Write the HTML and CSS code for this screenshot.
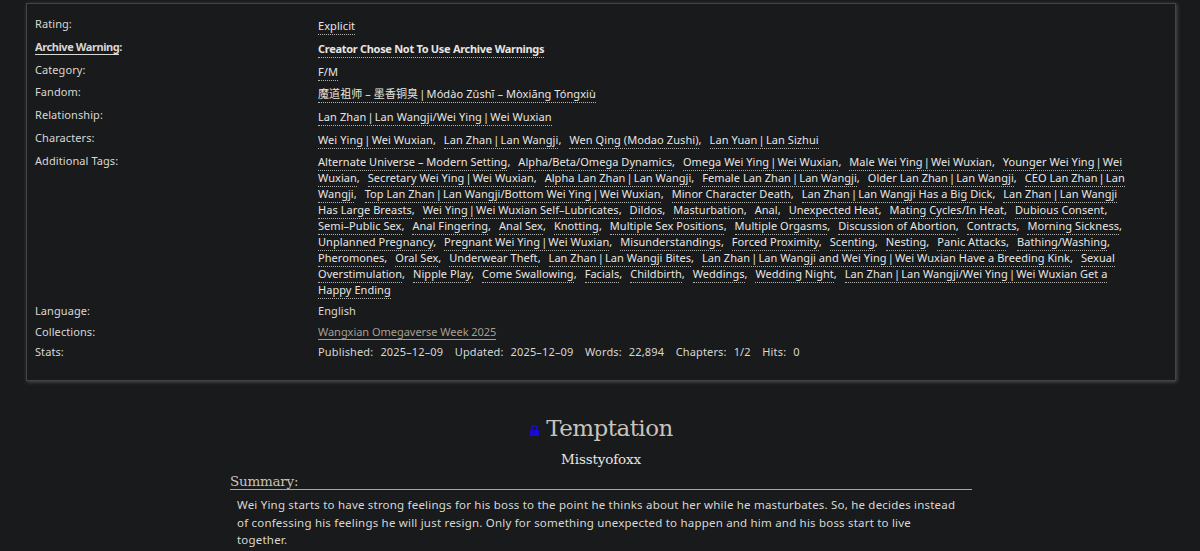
FILE: index.html
```
<!DOCTYPE html>
<html lang="en">

<head>
    <meta charset="UTF-8">
    <meta name="viewport" content="width=device-width, initial-scale=1.0">
    <title>Temptation</title>
    <link rel="stylesheet" href="styles.css">
</head>

<body>
    <dl class="meta">
        <dt>Rating:</dt>
        <dd class="tags"><a>Explicit</a></dd>
        <dt class="warning"><a>Archive Warning</a>:</dt>
        <dd class="tags warning"><a>Creator Chose Not To Use Archive Warnings</a></dd>
        <dt>Category:</dt>
        <dd class="tags"><a>F/M</a></dd>
        <dt>Fandom:</dt>
        <dd class="tags fandom"><a><span class="cjk">魔道祖师</span> – <span class="cjk">墨香铜臭</span> <i>|</i> Módào Zǔshī – Mòxiāng Tóngxiù</a></dd>
        <dt>Relationship:</dt>
        <dd class="tags"><a>Lan Zhan <i>|</i> Lan Wangji/Wei Ying <i>|</i> Wei Wuxian</a></dd>
        <dt>Characters:</dt>
        <dd class="tags"><a>Wei Ying <i>|</i> Wei Wuxian</a>, <a>Lan Zhan <i>|</i> Lan Wangji</a>, <a>Wen Qing (Modao Zushi)</a>, <a>Lan Yuan <i>|</i> Lan Sizhui</a></dd>
        <dt>Additional Tags:</dt>
        <dd class="tags freeform">
            <a>Alternate Universe – Modern Setting</a>, <a>Alpha/Beta/Omega Dynamics</a>, <a>Omega Wei Ying <i>|</i> Wei Wuxian</a>, <a>Male Wei Ying <i>|</i> Wei Wuxian</a>, <a>Younger Wei Ying <i>|</i> Wei<br>
            Wuxian</a>, <a>Secretary Wei Ying <i>|</i> Wei Wuxian</a>, <a>Alpha Lan Zhan <i>|</i> Lan Wangji</a>, <a>Female Lan Zhan <i>|</i> Lan Wangji</a>, <a>Older Lan Zhan <i>|</i> Lan Wangji</a>, <a>CEO Lan Zhan <i>|</i> Lan<br>
            Wangji</a>, <a>Top Lan Zhan <i>|</i> Lan Wangji/Bottom Wei Ying <i>|</i> Wei Wuxian</a>, <a>Minor Character Death</a>, <a>Lan Zhan <i>|</i> Lan Wangji Has a Big Dick</a>, <a>Lan Zhan <i>|</i> Lan Wangji<br>
            Has Large Breasts</a>, <a>Wei Ying <i>|</i> Wei Wuxian Self–Lubricates</a>, <a>Dildos</a>, <a>Masturbation</a>, <a>Anal</a>, <a>Unexpected Heat</a>, <a>Mating Cycles/In Heat</a>, <a>Dubious Consent</a>,<br>
            <a>Semi–Public Sex</a>, <a>Anal Fingering</a>, <a>Anal Sex</a>, <a>Knotting</a>, <a>Multiple Sex Positions</a>, <a>Multiple Orgasms</a>, <a>Discussion of Abortion</a>, <a>Contracts</a>, <a>Morning Sickness</a>,<br>
            <a>Unplanned Pregnancy</a>, <a>Pregnant Wei Ying <i>|</i> Wei Wuxian</a>, <a>Misunderstandings</a>, <a>Forced Proximity</a>, <a>Scenting</a>, <a>Nesting</a>, <a>Panic Attacks</a>, <a>Bathing/Washing</a>,<br>
            <a>Pheromones</a>, <a>Oral Sex</a>, <a>Underwear Theft</a>, <a>Lan Zhan <i>|</i> Lan Wangji Bites</a>, <a>Lan Zhan <i>|</i> Lan Wangji and Wei Ying <i>|</i> Wei Wuxian Have a Breeding Kink</a>, <a>Sexual<br>
            Overstimulation</a>, <a>Nipple Play</a>, <a>Come Swallowing</a>, <a>Facials</a>, <a>Childbirth</a>, <a>Weddings</a>, <a>Wedding Night</a>, <a>Lan Zhan <i>|</i> Lan Wangji/Wei Ying <i>|</i> Wei Wuxian Get a<br>
            Happy Ending</a>
        </dd>
        <dt>Language:</dt>
        <dd>English</dd>
        <dt>Collections:</dt>
        <dd class="collections"><a>Wangxian Omegaverse Week 2025</a></dd>
        <dt>Stats:</dt>
        <dd class="stats">
            <span>Published:</span><span>2025–12–09</span>
            <span>Updated:</span><span>2025–12–09</span>
            <span>Words:</span><span>22,894</span>
            <span>Chapters:</span><span>1/2</span>
            <span>Hits:</span><span>0</span>
        </dd>
    </dl>

    <div class="preface">
        <h2 class="title">
            <svg class="lock" viewBox="0 0 9 11" width="9" height="11">
                <rect x="0" y="5" width="9" height="6" rx="0.6" fill="#1a0bd0" />
                <path d="M2 5.5V3.2a2.5 2.5 0 0 1 5 0v2.3" fill="none" stroke="#1a0bd0" stroke-width="1.7" />
            </svg>
            <span>Temptation</span>
        </h2>
        <h3 class="byline">Misstyofoxx</h3>
        <div class="summary">
            <h3>Summary:</h3>
            <p>Wei Ying starts to have strong feelings for his boss to the point he thinks about her while he masturbates. So, he decides instead<br>
                of confessing his feelings he will just resign. Only for something unexpected to happen and him and his boss start to live<br>
                together.</p>
        </div>
    </div>
</body>

</html>
```

FILE: styles.css
```
* {
    margin: 0;
    padding: 0;
    box-sizing: border-box;
}

body {
    font-family: "Noto Sans", "Noto Sans CJK SC", sans-serif;
    font-size: 11px;
    line-height: 16px;
    color: #d8d8d6;
    background-color: #181a1b;
    height: 551px;
    overflow: hidden;
}

.meta {
    display: grid;
    grid-template-columns: 283px 1fr;
    grid-template-rows: repeat(6, 22.75px) 150.5px 20.5px 20.5px 20.5px;
    width: 1150px;
    height: 378px;
    margin: 3px 0 0 26px;
    padding: 12px 8px 0;
    border: 1px solid #414546;
    box-shadow: 1px 1px 4px #4a5254;
    letter-spacing: 0.08px;
    white-space: nowrap;
}

.meta .warning {
    font-weight: bold;
    letter-spacing: -0.3px;
}

.meta dt.warning {
    letter-spacing: -0.42px;
}

.meta dt.warning a {
    border-bottom: 1px solid #d8d8d6;
}

.tags {
    padding-top: 2px;
    color: #e8e6e3;
}

.tags a {
    padding-bottom: 1px;
    border-bottom: 1px dotted #b5b3ae;
}

.tags a + a {
    margin-left: 5px;
}

.tags i {
    margin: 0 -1.8px;
    font-style: normal;
}

/* first line sits a little higher than the single tags */
.freeform {
    padding-top: 1.5px;
    letter-spacing: 0.05px;
}

.cjk {
    font-family: "Noto Sans CJK SC", sans-serif;
    font-size: 11px;
    line-height: 1;
}

.collections a {
    letter-spacing: -0.03px;
    color: #a89f91;
    border-bottom: 1px solid #a89f91;
}

.stats {
    letter-spacing: 0.15px;
}

.stats span:nth-child(odd) {
    margin-right: 7px;
}

.stats span:nth-child(even) {
    margin-right: 8.5px;
}

.preface {
    margin-top: 30px;
}

.title {
    display: flex;
    justify-content: center;
    align-items: center;
    gap: 7px;
    height: 34px;
    padding-left: 3px;
    font-family: "DejaVu Serif", serif;
    font-size: 23px;
    font-weight: normal;
    letter-spacing: -0.55px;
    color: #c8c3bc;
}

.lock {
    margin-top: 5px;
}

.byline {
    margin-top: 5px;
    padding-left: 2px;
    text-align: center;
    font-family: "DejaVu Serif", serif;
    font-size: 13.5px;
    font-weight: normal;
    letter-spacing: -0.15px;
    line-height: 18px;
    color: #e8e6e3;
}

.summary {
    width: 742px;
    margin: 5px 0 0 230px;
}

.summary h3 {
    height: 17px;
    border-bottom: 1px solid #a3a8a0;
    font-family: "DejaVu Serif", serif;
    font-size: 13.5px;
    font-weight: normal;
    letter-spacing: -0.25px;
    line-height: 17px;
    color: #c8c3bc;
}

.summary p {
    margin: 6px 0 0 7px;
    font-size: 11.5px;
    letter-spacing: 0.2px;
    line-height: 17.5px;
    white-space: nowrap;
}
```
